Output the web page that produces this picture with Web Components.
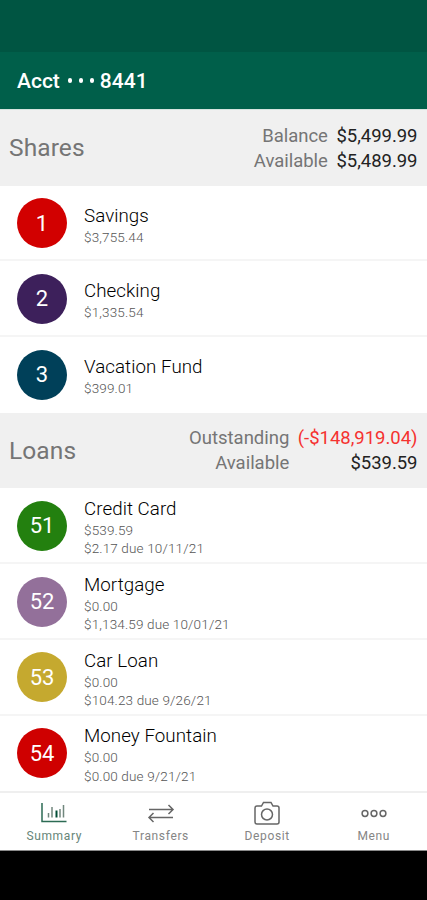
<!DOCTYPE html>
<html lang="en">
<head>
<meta charset="utf-8">
<title>Account summary</title>
<style>
body{margin:0;background:#000;font-family:Roboto,"Liberation Sans",sans-serif;}
</style>
</head>
<body>
<bank-app></bank-app>
<script>
const define = (name, html) => customElements.define(name, class extends HTMLElement {
  constructor() {
    super();
    this.attachShadow({ mode: 'open' }).innerHTML = html;
  }
  connectedCallback() {
    const c = this.getAttribute('color');
    if (c) this.style.setProperty('--color', c);
  }
});

define('app-header', `<style>
:host{display:block;background:#005f4a;border-bottom:1px solid #d5e4df;color:#fff}
.status{height:52px;background:#005542}
.bar{height:57px;display:flex;align-items:center;padding-left:17px;font-size:21px;font-weight:500;letter-spacing:0;white-space:pre}
.dots{display:flex;gap:6.5px;margin:0 5.5px 0 8px}
.dots i{width:4.5px;height:4.5px;border-radius:50%;background:#fff}
</style><div class="status"></div><div class="bar"><span>Acct</span><span class="dots"><i></i><i></i><i></i></span><span><slot></slot></span></div>`);

define('section-header', `<style>
:host{display:flex;box-sizing:border-box;height:75.5px;background:#f0f0f0;align-items:center;justify-content:space-between;padding:0 9.5px 0 9px;color:#757575}
.title{font-size:24.5px;letter-spacing:.1px;line-height:28px;padding-top:1px}
.totals{display:grid;grid-template-columns:auto auto;column-gap:8.5px;text-align:right;font-size:18.5px;line-height:25px;letter-spacing:-.02px;padding-top:1.5px}
</style><div class="title"><slot name="title"></slot></div><div class="totals"><slot></slot></div>`);

define('account-row', `<style>
:host{display:flex;box-sizing:border-box;height:75.75px;background:#fff;border-bottom:2px solid #f5f5f5;align-items:center;padding:1.5px 0 0 17px;gap:17px}
:host([last]){border-bottom-color:#fff}
.badge{width:50px;height:50px;border-radius:50%;background:var(--color);color:#fff;display:flex;align-items:center;justify-content:center;font-size:22px;line-height:26px;padding-top:1px;box-sizing:border-box;flex:none}
.text{display:flex;flex-direction:column;padding-top:3px}
.name{font-size:18.75px;line-height:24px;letter-spacing:.05px;font-weight:300;color:#000}
::slotted(p){margin:0;font-size:13.5px;line-height:18.25px;letter-spacing:.15px;font-weight:300;color:#555}
</style><div class="badge"><slot name="id"></slot></div><div class="text"><div class="name"><slot name="name"></slot></div><slot></slot></div>`);

define('nav-item', `<style>
:host{display:flex;flex:1;flex-direction:column;align-items:center;color:var(--color,#666)}
::slotted(svg){display:block;width:28px;height:28px;fill:none;stroke:currentColor;stroke-width:1.5}
.label{font-size:12px;line-height:14px;margin-top:1px;letter-spacing:.65px;color:#858585}
:host([active]) .label{color:#668578}
</style><slot name="icon"></slot><div class="label"><slot></slot></div>`);

define('nav-bar', `<style>
:host{display:flex;box-sizing:border-box;height:60px;background:#fff;border-top:2px solid #efefef;border-bottom:1px solid #8a8a8a;padding:7px 0 0 1px}
</style><slot></slot>`);

const row = (id, color, name, lines, last) =>
  `<account-row color="${color}"${last ? ' last' : ''}><span slot="id">${id}</span><span slot="name">${name}</span>${lines.map(l => `<p>${l}</p>`).join('')}</account-row>`;

define('bank-app', `<style>
:host{display:block;width:427px;height:851px;background:#fff;overflow:hidden}
.value{color:#222}.debt{color:#f5322f}
</style>
<app-header>8441</app-header>
<section-header><span slot="title">Shares</span>
<span>Balance</span><span class="value">$5,499.99</span><span>Available</span><span class="value">$5,489.99</span></section-header>
${row(1, '#d20000', 'Savings', ['$3,755.44'])}
${row(2, '#3d205b', 'Checking', ['$1,335.54'])}
${row(3, '#004059', 'Vacation Fund', ['$399.01'], true)}
<section-header><span slot="title">Loans</span>
<span>Outstanding</span><span class="debt">(-$148,919.04)</span><span>Available</span><span class="value">$539.59</span></section-header>
${row(51, '#23800f', 'Credit Card', ['$539.59', '$2.17 due 10/11/21'])}
${row(52, '#93709a', 'Mortgage', ['$0.00', '$1,134.59 due 10/01/21'])}
${row(53, '#c5a92f', 'Car Loan', ['$0.00', '$104.23 due 9/26/21'])}
${row(54, '#cf0000', 'Money Fountain', ['$0.00', '$0.00 due 9/21/21'], true)}
<nav-bar>
<nav-item active color="#2c6b54"><svg slot="icon" viewBox="0 0 28 28"><path d="M2 3v18.500h24.500"/><path d="M8.500 13v4.500M12 7v10.500M20 9v8.500M23.500 5v12.500" stroke="#71877e" stroke-width="1.500"/><path d="M16.500 10.500v7" stroke="#004c35" stroke-width="2"/></svg>Summary</nav-item>
<nav-item><svg slot="icon" viewBox="0 0 28 28"><path d="M2 9.500h24M21.500 5l4.500 4.500-4.500 4.500M26 17.500H2M6.500 13L2 17.500 6.500 22"/></svg>Transfers</nav-item>
<nav-item><svg slot="icon" viewBox="0 0 28 28"><path d="M4 6h4.500l2-3.500h7.500l2 3.500H24q2 0 2 2v14q0 2-2 2H4q-2 0-2-2V8q0-2 2-2z"/><circle cx="14" cy="14.500" r="5.500"/></svg>Deposit</nav-item>
<nav-item><svg slot="icon" viewBox="0 0 28 28"><circle cx="5" cy="13.500" r="2.900"/><circle cx="14" cy="13.500" r="2.900"/><circle cx="23" cy="13.500" r="2.900"/></svg>Menu</nav-item>
</nav-bar>`);
</script>
</body>
</html>
